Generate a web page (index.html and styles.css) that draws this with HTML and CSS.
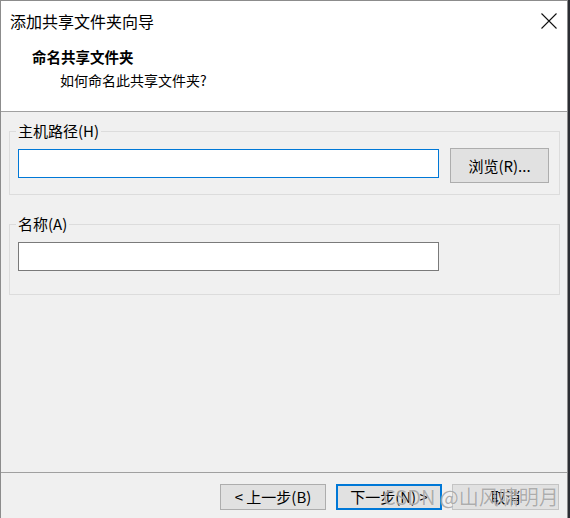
FILE: index.html
```html
<!DOCTYPE html>
<html lang="zh-CN">
<head>
<meta charset="utf-8">
<title>添加共享文件夹向导</title>
<link rel="stylesheet" href="styles.css">
</head>
<body>
<div class="window">
  <div class="top">
    <div class="titlebar">
      <span class="title">添加共享文件夹向导</span>
      <svg class="close" width="16" height="16" viewBox="0 0 16 16"><path d="M0.5 0.5 L15.5 15.5 M15.5 0.5 L0.5 15.5" stroke="#111" stroke-width="1.1" fill="none"/></svg>
    </div>
    <div class="header">
      <div class="h-title">命名共享文件夹</div>
      <div class="h-sub">如何命名此共享文件夹?</div>
    </div>
  </div>
  <div class="body">
    <fieldset class="group group-path">
      <legend>主机路径(H)</legend>
      <div class="row">
        <div class="input focused"></div>
        <button class="btn browse">浏览(R)...</button>
      </div>
    </fieldset>
    <fieldset class="group group-name">
      <legend>名称(A)</legend>
      <div class="row">
        <div class="input"></div>
      </div>
    </fieldset>
  </div>
  <div class="footer">
    <button class="btn">&lt; 上一步(B)</button>
    <button class="btn default">下一步(N) &gt;</button>
    <button class="btn cancel">取消</button>
    <div class="watermark">CSDN @山风啸明月</div>
  </div>
</div>
</body>
</html>
```
FILE: styles.css
```css
html, body {
  margin: 0;
  padding: 0;
}
body {
  width: 570px;
  height: 518px;
  overflow: hidden;
  background: #2b2d33;
  font-family: "Noto Sans CJK SC", "Noto Sans", sans-serif;
  color: #000;
}
.window {
  width: 566px;
  height: 517px;
  border: 1px solid #8c8c8c;
  border-bottom: none;
  background: #f0f0f0;
  display: flex;
  flex-direction: column;
}
.top {
  background: #fff;
  height: 110px;
  border-bottom: 1px solid #a0a0a0;
  display: flex;
  flex-direction: column;
}
.titlebar {
  height: 39px;
  display: flex;
  align-items: center;
  justify-content: space-between;
  padding: 0 10px 0 9px;
}
.title {
  font-size: 16px;
  line-height: 20px;
}
.close {
  display: block;
}
.header {
  padding: 7px 0 0 31px;
}
.h-title {
  font-size: 14.5px;
  font-weight: bold;
  line-height: 20px;
}
.h-sub {
  font-size: 14px;
  line-height: 20px;
  margin: 3px 0 0 28px;
}
.body {
  flex: 1;
  padding: 9px 7px 0 8px;
  display: flex;
  flex-direction: column;
}
.group {
  margin: 0;
  min-width: 0;
  border: 1px solid #dcdcdc;
  padding: 7px 8px 11px 8px;
}
.group legend {
  font-size: 15px;
  line-height: 20px;
  padding: 0 2px;
  margin-left: -2px;
}
.group-name {
  margin-top: 19px;
  padding: 8px 8px 23px 8px;
}
.row {
  display: flex;
  align-items: flex-start;
  gap: 11px;
}
.input {
  width: 419px;
  height: 27px;
  background: #fff;
  border: 1px solid #7a7a7a;
}
.group-path .input {
  margin-top: 1px;
}
.input.focused {
  border-color: #0078d7;
}
.btn {
  font-family: inherit;
  font-size: 15px;
  line-height: 20px;
  color: #000;
  background: #e1e1e1;
  border: 1px solid #adadad;
  padding: 0;
  margin: 0;
  width: 106px;
  height: 26px;
}
.browse {
  width: 99px;
  height: 35px;
}
.footer {
  position: relative;
  height: 46px;
  border-top: 1px solid #a0a0a0;
  display: flex;
  justify-content: flex-end;
  align-items: flex-start;
  gap: 10px;
  padding: 11px 8px 0 0;
  box-sizing: border-box;
}
.btn.default {
  border: 2px solid #0078d7;
}
.cancel {
  width: 107px;
  border-color: #c4c4c4;
}
.watermark {
  position: absolute;
  left: 382px;
  top: 12px;
  font-size: 20px;
  line-height: 24px;
  color: rgba(140, 140, 140, 0.7);
  text-shadow: 0 0 1px rgba(255, 255, 255, 0.8);
  white-space: nowrap;
  pointer-events: none;
}
```
